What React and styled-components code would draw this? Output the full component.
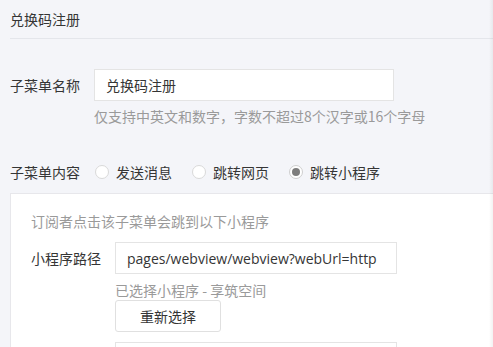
import React, { useState } from 'react'
import styled, { createGlobalStyle } from 'styled-components'

const GlobalStyle = createGlobalStyle`
  html, body {
    margin: 0;
    padding: 0;
    background: #f4f5f9;
  }
  body {
    font-family: "Noto Sans CJK SC", "Noto Sans", sans-serif;
    font-size: 14px;
    color: #353535;
    overflow: hidden;
  }
`

const Page = styled.div`
  position: relative;
  height: 347px;
  padding-left: 10px;
  overflow: hidden;
`

const EdgeShadow = styled.div`
  position: absolute;
  top: 0;
  right: 0;
  width: 4px;
  height: 100%;
  background: linear-gradient(to right, rgba(0, 0, 0, 0), rgba(0, 0, 0, 0.05));
`

const Header = styled.div`
  height: 38px;
  display: flex;
  align-items: center;
  border-bottom: 1px solid #e4e6eb;
  line-height: 20px;
`

const Row = styled.div`
  display: flex;
  align-items: flex-start;
  margin-top: ${p => p.$top || 0}px;
`

const Label = styled.div`
  width: ${p => p.$width || 84}px;
  flex-shrink: 0;
  line-height: 32px;
  color: #353535;
`

const Field = styled.div`
  display: flex;
  flex-direction: column;
  align-items: flex-start;
`

const TextInput = styled.input`
  box-sizing: border-box;
  width: ${p => p.$width}px;
  height: 32px;
  margin: 0;
  padding: 0 11px;
  border: 1px solid #e4e4e4;
  border-radius: 0;
  background: #fff;
  font-family: "Open Sans", "Noto Sans CJK SC", sans-serif;
  font-size: 14px;
  color: #353535;
  outline: none;
`

const Hint = styled.div`
  line-height: 20px;
  margin-top: ${p => p.$top || 0}px;
  color: #9a9a9a;
`

const Radios = styled.div`
  display: flex;
  align-items: center;
  height: 32px;
  padding-left: 1px;
`

const RadioItem = styled.label`
  display: flex;
  align-items: center;
  gap: 7px;
  margin-right: 20px;
  cursor: pointer;
`

const Dot = styled.span`
  box-sizing: border-box;
  width: 14px;
  height: 14px;
  border-radius: 50%;
  border: 1px solid ${p => (p.$on ? '#cfcfcf' : '#d9d9d9')};
  background: #fff;
  display: flex;
  align-items: center;
  justify-content: center;

  &::after {
    content: '';
    width: 8px;
    height: 8px;
    border-radius: 50%;
    background: ${p => (p.$on ? '#7d7d7d' : 'transparent')};
  }
`

const Panel = styled.div`
  margin-top: 5px;
  background: #fff;
  border: 1px solid #e7e7eb;
  border-right: none;
  padding: 17px 0 40px 20px;
`

const Button = styled.button`
  box-sizing: border-box;
  width: 106px;
  height: 32px;
  margin: 0;
  padding: 0;
  background: #fff;
  border: 1px solid #e0e0e0;
  border-radius: 3px;
  font-family: inherit;
  font-size: 14px;
  color: #353535;
  cursor: pointer;
`

const Spacer = styled.div`
  height: ${p => p.$h}px;
`

const options = ['发送消息', '跳转网页', '跳转小程序']

export default function App() {
  const [choice, setChoice] = useState(2)

  return (
    <Page>
      <GlobalStyle />
      <Header>兑换码注册</Header>

      <Row $top={30}>
        <Label>子菜单名称</Label>
        <Field>
          <TextInput $width={300} defaultValue="兑换码注册" />
          <Hint $top={5}>仅支持中英文和数字，字数不超过8个汉字或16个字母</Hint>
        </Field>
      </Row>

      <Row $top={30}>
        <Label>子菜单内容</Label>
        <Radios>
          {options.map((o, i) => (
            <RadioItem key={o} onClick={() => setChoice(i)}>
              <Dot $on={choice === i} />
              {o}
            </RadioItem>
          ))}
        </Radios>
      </Row>

      <Panel>
        <Hint>订阅者点击该子菜单会跳到以下小程序</Hint>
        <Row $top={11}>
          <Label>小程序路径</Label>
          <Field>
            <TextInput $width={282} defaultValue="pages/webview/webview?webUrl=http" />
            <Hint $top={6}>已选择小程序 - 享筑空间</Hint>
            <Button>重新选择</Button>
            <Spacer $h={10} />
            <TextInput $width={282} defaultValue="" />
          </Field>
        </Row>
      </Panel>

      <EdgeShadow />
    </Page>
  )
}
